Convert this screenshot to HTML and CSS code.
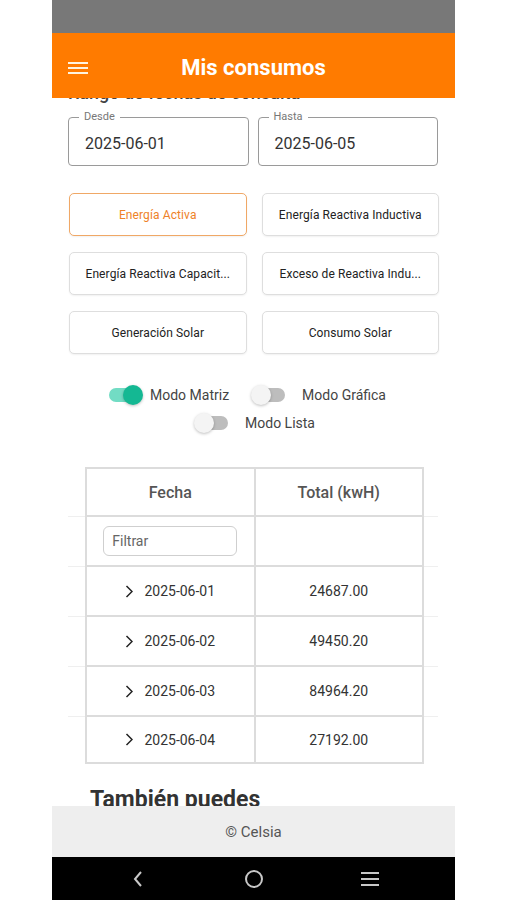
FILE: index.html
```html
<!DOCTYPE html>
<html lang="es">
<head>
    <meta charset="UTF-8">
    <meta name="viewport" content="width=device-width, initial-scale=1.0">
    <title>Mis consumos - Celsia</title>
    <link rel="stylesheet" href="styles.css">
</head>
<body>

<div class="phone">
    <div class="status-bar"></div>

    <header class="app-bar">
        <button class="menu-btn" type="button" aria-label="Menú">
            <svg width="20" height="12" viewBox="0 0 20 12">
                <rect x="0" y="0" width="20" height="2" fill="#fff4e0"/>
                <rect x="0" y="5" width="20" height="2" fill="#fff4e0"/>
                <rect x="0" y="10" width="20" height="2" fill="#fff4e0"/>
            </svg>
        </button>
        <h1 class="app-title">Mis consumos</h1>
    </header>

    <main class="content">
        <h2 class="range-title">Rango de fechas de consulta</h2>

        <div class="dates">
            <div class="date-field">
                <span class="date-label">Desde</span>
                <span class="date-value">2025-06-01</span>
            </div>
            <div class="date-field">
                <span class="date-label">Hasta</span>
                <span class="date-value">2025-06-05</span>
            </div>
        </div>

        <div class="types">
            <button type="button" class="type-btn active">Energía Activa</button>
            <button type="button" class="type-btn">Energía Reactiva Inductiva</button>
            <button type="button" class="type-btn">Energía Reactiva Capacit...</button>
            <button type="button" class="type-btn">Exceso de Reactiva Indu...</button>
            <button type="button" class="type-btn">Generación Solar</button>
            <button type="button" class="type-btn">Consumo Solar</button>
        </div>

        <div class="modes">
            <div class="mode-row first">
                <label class="mode">
                    <span class="switch on"><span class="track"></span><span class="thumb"></span></span>
                    <span class="mode-label">Modo Matriz</span>
                </label>
                <label class="mode">
                    <span class="switch off"><span class="track"></span><span class="thumb"></span></span>
                    <span class="mode-label">Modo Gráfica</span>
                </label>
            </div>
            <div class="mode-row second">
                <label class="mode">
                    <span class="switch off"><span class="track"></span><span class="thumb"></span></span>
                    <span class="mode-label">Modo Lista</span>
                </label>
            </div>
        </div>

        <div class="table">
            <div class="trow head">
                <div class="cell first">Fecha</div>
                <div class="cell">Total (kwH)</div>
            </div>
            <div class="trow">
                <div class="cell first"><input class="filter" type="text" placeholder="Filtrar"></div>
                <div class="cell"></div>
            </div>
            <div class="trow">
                <div class="cell first">
                    <svg class="chevron" width="8" height="13" viewBox="0 0 8 13"><polyline points="1.5,1 7,6.5 1.5,12" fill="none" stroke="#222" stroke-width="1.5"/></svg>2025-06-01
                </div>
                <div class="cell">24687.00</div>
            </div>
            <div class="trow">
                <div class="cell first">
                    <svg class="chevron" width="8" height="13" viewBox="0 0 8 13"><polyline points="1.5,1 7,6.5 1.5,12" fill="none" stroke="#222" stroke-width="1.5"/></svg>2025-06-02
                </div>
                <div class="cell">49450.20</div>
            </div>
            <div class="trow">
                <div class="cell first">
                    <svg class="chevron" width="8" height="13" viewBox="0 0 8 13"><polyline points="1.5,1 7,6.5 1.5,12" fill="none" stroke="#222" stroke-width="1.5"/></svg>2025-06-03
                </div>
                <div class="cell">84964.20</div>
            </div>
            <div class="trow last">
                <div class="cell first">
                    <svg class="chevron" width="8" height="13" viewBox="0 0 8 13"><polyline points="1.5,1 7,6.5 1.5,12" fill="none" stroke="#222" stroke-width="1.5"/></svg>2025-06-04
                </div>
                <div class="cell">27192.00</div>
            </div>
        </div>

        <h2 class="more-title">También puedes</h2>
    </main>

    <footer class="footer">© Celsia</footer>

    <nav class="nav-bar">
        <span class="nav-item">
            <svg width="12" height="18" viewBox="0 0 12 18">
                <polyline points="9,2 3,9 9,16" fill="none" stroke="#c8c8c8" stroke-width="2"/>
            </svg>
        </span>
        <span class="nav-item">
            <svg width="20" height="20" viewBox="0 0 20 20">
                <circle cx="10" cy="10" r="8" fill="none" stroke="#c8c8c8" stroke-width="2"/>
            </svg>
        </span>
        <span class="nav-item">
            <svg width="18" height="14" viewBox="0 0 18 14">
                <rect x="0" y="0" width="18" height="2" fill="#c8c8c8"/>
                <rect x="0" y="6" width="18" height="2" fill="#c8c8c8"/>
                <rect x="0" y="12" width="18" height="2" fill="#c8c8c8"/>
            </svg>
        </span>
    </nav>
</div>

</body>
</html>
```

FILE: styles.css
```css
body {
    margin: 0;
    background: #ffffff;
    font-family: Roboto, "Noto Sans", Arial, sans-serif;
}
.phone {
    width: 403px;
    height: 900px;
    margin-left: 52px;
    display: flex;
    flex-direction: column;
}
.status-bar {
    height: 33px;
    background-color: #787878;
}
.app-bar {
    height: 65px;
    background-color: #ff7b00;
    display: flex;
    align-items: center;
    position: relative;
    z-index: 1;
}
.menu-btn {
    position: absolute;
    left: 16px;
    top: 29px;
    padding: 0;
    border: none;
    background: none;
    line-height: 0;
}
.app-title {
    flex: 1;
    margin: 0;
    padding-top: 4px;
    text-align: center;
    color: #ffffff;
    font-size: 22px;
    font-weight: 700;
}
.content {
    height: 708px;
    overflow: hidden;
    padding: 0 17px 0 16px;
    display: flex;
    flex-direction: column;
}
.range-title {
    margin: -16px 0 0 0;
    line-height: 22px;
    font-size: 18px;
    font-weight: 500;
    color: #444;
    white-space: nowrap;
}

/* date pickers */
.dates {
    display: grid;
    grid-template-columns: 1fr 1fr;
    gap: 9px;
    margin-top: 13px;
}
.date-field {
    position: relative;
    height: 49px;
    border: 1px solid #9a9a9a;
    border-radius: 4px;
    box-sizing: border-box;
    display: flex;
    align-items: center;
    padding: 3px 0 0 16px;
}
.date-label {
    position: absolute;
    top: -8px;
    left: 10px;
    padding: 0 5px;
    background: #fff;
    font-size: 11px;
    line-height: 14px;
    color: #777;
}
.date-value {
    font-size: 16px;
    color: #333;
}

/* energy type buttons */
.types {
    display: grid;
    grid-template-columns: 1fr 1fr;
    grid-auto-rows: 43px;
    column-gap: 15px;
    row-gap: 16px;
    margin: 27px -1px 0 1px;
}
.type-btn {
    border: 1px solid #dedede;
    border-radius: 5px;
    background: #fff;
    box-shadow: 0 1px 2px rgba(0, 0, 0, 0.06);
    font-family: Roboto, Arial, sans-serif;
    font-size: 12px;
    letter-spacing: 0.1px;
    color: #222;
    padding: 0 4px;
    white-space: nowrap;
    overflow: hidden;
}
.type-btn.active {
    border-color: #f0a866;
    color: #ee8228;
}

/* mode switches */
.modes {
    margin-top: 27px;
}
.mode-row {
    display: flex;
    justify-content: center;
    gap: 24px;
    height: 28px;
}
.mode-row.first {
    padding-right: 13px;
}
.mode-row.second {
    padding-left: 5px;
}
.mode {
    display: flex;
    align-items: center;
}
.switch {
    position: relative;
    width: 36px;
    height: 28px;
}
.track {
    position: absolute;
    left: 2px;
    top: 7px;
    width: 30px;
    height: 14px;
    border-radius: 7px;
    background: #bdbdbd;
}
.thumb {
    position: absolute;
    top: 4px;
    width: 20px;
    height: 20px;
    border-radius: 50%;
    background: #f4f4f4;
    box-shadow: 0 1px 3px rgba(0, 0, 0, 0.25);
}
.switch.on .track {
    background: #72dcc4;
}
.switch.on .thumb {
    left: 16px;
    background: #14b893;
}
.switch.off .thumb {
    left: -2px;
}
.mode-label {
    margin-left: 7px;
    font-size: 14px;
    color: #444;
}
.switch.off + .mode-label {
    margin-left: 13px;
}

/* data table */
.table {
    margin-top: 30px;
}
.trow {
    display: flex;
    height: 50px;
    padding: 0 14px 0 17px;
    background: linear-gradient(#efefef, #efefef) bottom / 100% 1px no-repeat;
}
.trow.last {
    height: 47px;
    background: none;
}
.cell {
    flex: 1;
    display: flex;
    align-items: center;
    justify-content: center;
    border-right: 2px solid #dcdcdc;
    border-bottom: 2px solid #dcdcdc;
    font-size: 14px;
    color: #333;
}
.cell.first {
    border-left: 2px solid #dcdcdc;
}
.head .cell {
    border-top: 2px solid #dcdcdc;
    font-size: 16px;
    font-weight: 500;
    color: #555;
}
.filter {
    width: 134px;
    height: 30px;
    box-sizing: border-box;
    border: 1px solid #cfcfcf;
    border-radius: 6px;
    padding: 0 8px;
    font-family: Roboto, Arial, sans-serif;
    font-size: 14px;
    color: #333;
}
.filter::placeholder {
    color: #666;
}
.chevron {
    margin-right: 11px;
}
.more-title {
    margin: 22px 0 0 22px;
    font-size: 23px;
    font-weight: 700;
    color: #333;
    white-space: nowrap;
}

.footer {
    height: 51px;
    background-color: #eeeeee;
    display: flex;
    align-items: center;
    justify-content: center;
    font-size: 15px;
    color: #555;
}
.nav-bar {
    height: 43px;
    background: #000;
    display: flex;
    align-items: center;
    justify-content: center;
}
.nav-item {
    width: 116px;
    display: flex;
    justify-content: center;
}
```
